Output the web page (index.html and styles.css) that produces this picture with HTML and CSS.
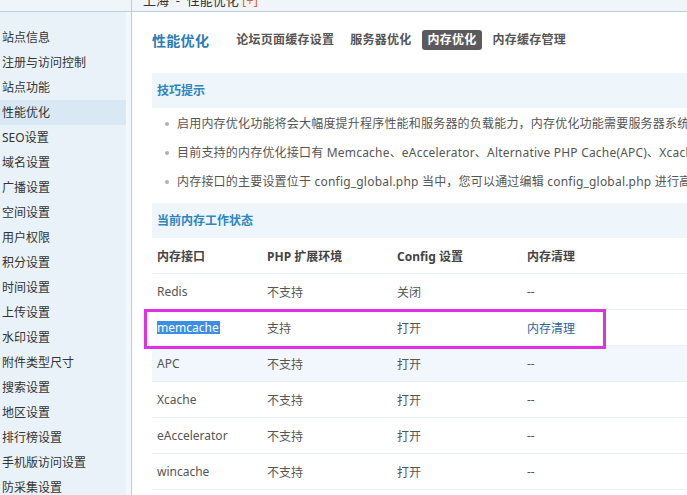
FILE: index.html
```html
<!DOCTYPE html>
<html lang="zh-CN">
<head>
   <meta charset="UTF-8">
   <meta name="viewport" content="width=device-width, initial-scale=1.0">
   <link rel="stylesheet" href="styles.css">
</head>
<body>
   <div class="layout">
      <div class="side">
         <div class="side-top"></div>
         <ul class="side-nav">
            <li>站点信息</li>
            <li>注册与访问控制</li>
            <li>站点功能</li>
            <li class="on">性能优化</li>
            <li>SEO设置</li>
            <li>域名设置</li>
            <li>广播设置</li>
            <li>空间设置</li>
            <li>用户权限</li>
            <li>积分设置</li>
            <li>时间设置</li>
            <li>上传设置</li>
            <li>水印设置</li>
            <li>附件类型尺寸</li>
            <li>搜索设置</li>
            <li>地区设置</li>
            <li>排行榜设置</li>
            <li>手机版访问设置</li>
            <li>防采集设置</li>
         </ul>
      </div>
      <div class="content">
         <div class="crumb">
            <div class="crumb-text">上海 &nbsp;-&nbsp; 性能优化 <span class="crumb-add">[+]</span></div>
         </div>
         <div class="main">
            <div class="page-head">
               <h3 class="page-title">性能优化</h3>
               <ul class="tabs">
                  <li>论坛页面缓存设置</li>
                  <li>服务器优化</li>
                  <li class="current">内存优化</li>
                  <li>内存缓存管理</li>
               </ul>
            </div>
            <div class="sec-head">技巧提示</div>
            <ul class="tips">
               <li>启用内存优化功能将会大幅度提升程序性能和服务器的负载能力，内存优化功能需要服务器系统以及PHP扩展模块支持</li>
               <li>目前支持的内存优化接口有 Memcache、eAccelerator、Alternative PHP Cache(APC)、Xcache、Redis、wincache 六种，优化系统将会依据当前服务器环境依次选用接口</li>
               <li>内存接口的主要设置位于 config_global.php 当中，您可以通过编辑 config_global.php 进行高级设置</li>
            </ul>
            <div class="sec-head">当前内存工作状态</div>
            <div class="state-wrap">
               <table class="state">
                  <tr class="head">
                     <th>内存接口</th>
                     <th>PHP 扩展环境</th>
                     <th>Config 设置</th>
                     <th>内存清理</th>
                  </tr>
                  <tr>
                     <td>Redis</td>
                     <td>不支持</td>
                     <td>关闭</td>
                     <td>--</td>
                  </tr>
                  <tr>
                     <td><span class="sel">memcache</span></td>
                     <td>支持</td>
                     <td>打开</td>
                     <td><a class="link" href="#">内存清理</a></td>
                  </tr>
                  <tr class="hover">
                     <td>APC</td>
                     <td>不支持</td>
                     <td>打开</td>
                     <td>--</td>
                  </tr>
                  <tr>
                     <td>Xcache</td>
                     <td>不支持</td>
                     <td>打开</td>
                     <td>--</td>
                  </tr>
                  <tr>
                     <td>eAccelerator</td>
                     <td>不支持</td>
                     <td>打开</td>
                     <td>--</td>
                  </tr>
                  <tr>
                     <td>wincache</td>
                     <td>不支持</td>
                     <td>打开</td>
                     <td>--</td>
                  </tr>
               </table>
               <div class="mark"></div>
            </div>
         </div>
      </div>
   </div>
</body>
</html>
```

FILE: styles.css
```css
html, body {
   margin: 0;
   padding: 0;
   overflow: hidden;
   background-color: #fff;
}
body {
   font-family: "Noto Sans", "Noto Sans CJK SC", sans-serif;
   font-size: 12px;
   color: #555;
}
ul {
   margin: 0;
   padding: 0;
   list-style: none;
}
.layout {
   display: flex;
   width: 900px;
   height: 495px;
}
.side {
   width: 126px;
   flex-shrink: 0;
   background-color: #e9f2f9;
   border-right: 5px solid #f3f8fc;
   box-shadow: 1px 0 0 #b9cedd;
   margin-right: 1px;
}
.side-top {
   height: 11px;
   background-color: #f0f5f9;
   border-bottom: 1px solid #bccdda;
   margin-right: -5px;
}
.side-nav {
   padding-top: 13px;
}
.side-nav li {
   height: 25px;
   line-height: 25px;
   padding-left: 2px;
   color: #333;
   white-space: nowrap;
}
.side-nav li.on {
   background-color: #d8e8f5;
}
.content {
   flex: 1;
}
.crumb {
   height: 11px;
   padding-left: 11px;
   background-color: #f0f5f9;
   border-bottom: 1px solid #bccdda;
   overflow: hidden;
   color: #333;
}
.crumb-text {
   margin-top: -8px;
   line-height: 16px;
   font-size: 13px;
}
.crumb-add {
   color: #d96c1b;
}
.main {
   padding-left: 20px;
}
.page-head {
   display: flex;
   align-items: center;
   height: 20px;
   margin-top: 18px;
   margin-bottom: 23px;
}
.page-title {
   margin: 0 22px 0 0;
   font-size: 14px;
   font-weight: bold;
   color: #2b7bb7;
   letter-spacing: 0.3px;
}
.tabs {
   display: flex;
   align-items: center;
}
.tabs li {
   height: 20px;
   line-height: 20px;
   padding: 0 5px;
   margin-right: 6px;
   font-weight: bold;
   color: #555;
   border-radius: 3px;
   letter-spacing: 0.25px;
}
.tabs li.current {
   background-color: #5c5a5d;
   color: #fff;
}
.sec-head {
   height: 35px;
   line-height: 35px;
   padding-left: 5px;
   background-color: #eef5fb;
   font-weight: bold;
   color: #2a87c2;
}
.tips {
   padding: 1px 0 7px 13px;
}
.tips li {
   position: relative;
   height: 29px;
   line-height: 29px;
   padding-left: 12px;
   white-space: nowrap;
   letter-spacing: 0.2px;
}
.tips li::before {
   content: "";
   position: absolute;
   left: 0;
   top: 13px;
   width: 4px;
   height: 4px;
   border-radius: 2px;
   background-color: #b0b0b0;
}
.state-wrap {
   position: relative;
}
.state {
   width: 100%;
   border-collapse: collapse;
}
.state th, .state td {
   height: 35px;
   padding: 0 5px;
   text-align: left;
   border-bottom: 1px solid #e8eef3;
   white-space: nowrap;
}
.state th {
   height: 35px;
   font-weight: bold;
   color: #444;
}
.state th:nth-child(1) {
   width: 100px;
}
.state th:nth-child(2), .state th:nth-child(3) {
   width: 120px;
}
.state tr.hover td {
   background-color: #f1f7fc;
}
.sel {
   background-color: #3a8ee6;
   color: #fff;
   line-height: 13px;
   display: inline-block;
   padding-right: 1px;
}
.link {
   color: #2d6497;
   text-decoration: none;
}
.mark {
   position: absolute;
   left: -8px;
   top: 71px;
   width: 456px;
   height: 34px;
   border: 3px solid #e030e2;
}
```
